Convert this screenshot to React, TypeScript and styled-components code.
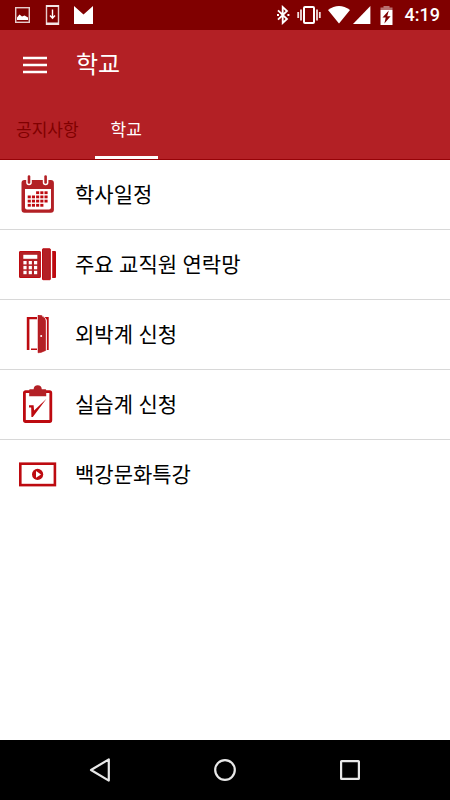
import React from "react";
import styled, { createGlobalStyle } from "styled-components";

const GlobalStyle = createGlobalStyle`
  * { box-sizing: border-box; }
  body {
    margin: 0;
    background: #ffffff;
    font-family: "Noto Sans", "Noto Sans CJK KR", sans-serif;
    color: #000000;
  }
  button { font: inherit; color: inherit; background: none; border: 0; padding: 0; cursor: pointer; }
  svg { display: block; flex: none; }
`;

const Screen = styled.div`
  display: flex;
  flex-direction: column;
  min-height: 100vh;
`;

const StatusBar = styled.div`
  display: flex;
  align-items: center;
  justify-content: space-between;
  height: 30px;
  padding: 0 10px 0 14px;
  background: #800000;
  color: #ffffff;
`;

const StatusGroup = styled.div<{ $gap: number }>`
  display: flex;
  align-items: center;
  gap: ${(p) => p.$gap}px;
`;

const Clock = styled.time`
  margin-left: 2px;
  font: 500 18px/30px Roboto, sans-serif;
`;

const Header = styled.header`
  background: #b32025;
  color: #ffffff;
  border-bottom: 1px solid #960308;
`;

const Toolbar = styled.div`
  display: flex;
  align-items: center;
  gap: 28px;
  height: 69px;
  padding: 0 22px;
`;

const MenuButton = styled.button`
  display: flex;
`;

const Title = styled.h1`
  margin: 0;
  padding-bottom: 2px;
  font-size: 24px;
  line-height: 32px;
  font-weight: 400;
`;

const Tabs = styled.div`
  display: flex;
  height: 60px;
`;

const Tab = styled.button<{ $active?: boolean }>`
  && {
    padding: 5px 16px 0;
    font-size: 17px;
    line-height: 24px;
    color: ${(p) => (p.$active ? "#ffffff" : "#800000")};
    border-bottom: 3px solid ${(p) => (p.$active ? "#ffffff" : "transparent")};
  }
`;

const List = styled.ul`
  flex: 1;
  margin: 0;
  padding: 0;
  list-style: none;
`;

const Item = styled.li`
  border-bottom: 1px solid #d8d8d8;
  &:last-child { border-bottom-color: transparent; }
`;

const RowButton = styled.button`
  && {
    display: flex;
    align-items: center;
    gap: 17px;
    width: 100%;
    height: 69px;
    padding: 0 18px;
    font-size: 21px;
    line-height: 30px;
    text-align: left;
  }
`;

const RowLabel = styled.span`
  padding-bottom: 2px;
`;

const NavBar = styled.nav`
  display: flex;
  justify-content: center;
  gap: 65px;
  height: 60px;
  background: #000000;
`;

const NavButton = styled.button`
  display: flex;
  align-items: center;
  justify-content: center;
  width: 60px;
`;

const RED = "#b32025";
const EDGE = "#bd0a10";

const RowIcon = ({ children }: { children: React.ReactNode }) => (
  <svg width="40" height="39" viewBox="0 0 40 39" aria-hidden="true">
    {children}
  </svg>
);

const calendarCells = [
  [2, 3, 4],
  [0, 1, 2, 3, 4],
  [0, 1, 2, 3, 4],
  [0, 1, 2, 3],
];

const CalendarIcon = () => (
  <RowIcon>
    <rect x="3.5" y="5" width="32.4" height="32.8" rx="3" fill={RED} />
    <path d="M7 14h26v18.5q0 2-2 2H9q-2 0-2-2z" fill="#fff" />
    {[11, 27.6].map((x) => (
      <g key={x}>
        <path d={`M${x - 2.8} 4v3.5a2.8 2.8 0 0 0 5.6 0V4z`} fill="#fff" />
        <path d={`M${x} 1.5v6`} stroke={RED} strokeWidth="2.6" strokeLinecap="round" />
      </g>
    ))}
    {calendarCells.map((cols, r) =>
      cols.map((c) => (
        <rect key={`${r}-${c}`} x={9.7 + c * 4.2} y={16.3 + r * 4.2} width="3.1" height="2.8" fill={EDGE} />
      ))
    )}
  </RowIcon>
);

const PhoneIcon = () => (
  <RowIcon>
    <rect x="1.5" y="6.5" width="20.9" height="26" rx="0.5" fill={RED} stroke={EDGE} />
    <rect x="5.3" y="9.8" width="14" height="4" fill="#fff" />
    {[16, 20.9, 25.8].map((y) =>
      [5.4, 10.7, 16].map((x) => <rect key={`${x}-${y}`} x={x} y={y} width="3.2" height="3.4" fill="#fff" />)
    )}
    <rect x="24.5" y="3.8" width="7.8" height="30.9" rx="0.5" fill={RED} stroke={EDGE} />
    <path d="M34.2 6H37q1 0 1 1v25q0 1-1 1h-2.8z" fill={EDGE} />
  </RowIcon>
);

const DoorIcon = () => (
  <RowIcon>
    <path d="M8.8 2H19v2.2h-7.6V35H8.8zM13 33.6h6V35h-6z" fill={EDGE} />
    <path d="M20 0l3.6.6q4 2 4.1 5v29.9L23 37.4l-3 .4z" fill={RED} stroke={EDGE} strokeWidth="0.5" />
    <path d="M25.5 2h5.2v33h-2V4.8z" fill={EDGE} />
    <path d="M24 .8q4.5 2 4.5 5v29" fill="none" stroke="#fff" strokeWidth="0.7" />
    <circle cx="23.2" cy="21" r="1" fill="#fff" />
  </RowIcon>
);

const ClipboardIcon = () => (
  <RowIcon>
    <rect x="6.4" y="6.7" width="26.4" height="29.8" rx="1.2" fill="#fff" stroke={EDGE} strokeWidth="2.8" />
    <path d="M11.2 11.2V5q0-.8.8-.8h3.6q.3-3.9 4.1-3.9t4.1 3.9h3.6q.8 0 .8.8v6.2z" fill={RED} />
    <path d="M11 20.2h4.6l.5 5.3L28.5 13.8 14.8 32h-1.4l-.2-9.6H11z" fill={EDGE} />
  </RowIcon>
);

const VideoIcon = () => (
  <RowIcon>
    <rect x="2.3" y="8.7" width="34.6" height="21.4" fill="#fff" stroke={EDGE} strokeWidth="2.6" />
    <circle cx="19.6" cy="19.4" r="5.6" fill={EDGE} />
    <path d="M18 16l5 3.4-5 3.4z" fill="#fff" />
  </RowIcon>
);

const items = [
  { label: "학사일정", Icon: CalendarIcon },
  { label: "주요 교직원 연락망", Icon: PhoneIcon },
  { label: "외박계 신청", Icon: DoorIcon },
  { label: "실습계 신청", Icon: ClipboardIcon },
  { label: "백강문화특강", Icon: VideoIcon },
];

export default function App() {
  return (
    <Screen>
      <GlobalStyle />
      <StatusBar>
        <StatusGroup $gap={14}>
          <svg width="17" height="20" viewBox="0 0 17 20">
            <rect x="1.7" y="2.7" width="13.6" height="14.6" fill="none" stroke="#e6cccc" strokeWidth="1.4" />
            <path d="M3 15v-2.5L5.5 9.6 8 11.5l2.5-1 3.5 2V15z" fill="#fff" />
          </svg>
          <svg width="15" height="20" viewBox="0 0 15 20">
            <path d="M1.5.8h12v18.4h-12z" fill="none" stroke="#e6cccc" strokeWidth="1.4" />
            <path d="M1 0h13v2H1zM1 17.5h13V20H1z" fill="#f2e5e5" />
            <path d="M7.5 4.5v8M5 10.5l2.5 2.7 2.5-2.7" fill="none" stroke="#fff" strokeWidth="1.4" />
          </svg>
          <svg width="19" height="18" viewBox="0 0 19 18">
            <path d="M0 0l9.5 8.5L19 0v18H0z" fill="#fff" />
          </svg>
        </StatusGroup>
        <StatusGroup $gap={7}>
          <svg width="14" height="20" viewBox="0 0 14 20">
            <path d="M2 5.3l9 8.7-4.3 4V2L11 6l-9 8.7" fill="none" stroke="#fff" strokeWidth="1.8" />
            <path d="M1 9h2v2H1zM11.4 9h2v2h-2z" fill="#fff" />
          </svg>
          <svg width="24" height="18" viewBox="0 0 24 18">
            <rect x="7" y="1" width="10" height="16" rx="1" fill="none" stroke="#fff" strokeWidth="2" />
            <path d="M4 3.5v11M20 3.5v11M1.2 6v6M22.8 6v6" stroke="#f2dede" strokeWidth="1.8" />
          </svg>
          <StatusGroup $gap={3}>
            <svg width="22" height="18" viewBox="0 0 22 18">
              <path d="M0 4Q11-4 22 4L11 17.6z" fill="#fff" />
            </svg>
            <svg width="18" height="18" viewBox="0 0 18 18">
              <path d="M17.4 0v18H0z" fill="#fff" />
            </svg>
          </StatusGroup>
          <svg width="18" height="19" viewBox="0 0 18 19">
            <path d="M5.5 0h6v1.5h3V4H2.5V1.5h3z" fill="#b87070" />
            <path d="M2.5 4h12v15h-12z" fill="#fff" />
            <path d="M10.8 4.5L4.5 11.5h3.2l-1.3 6 6.2-7.3H9.2z" fill="#800000" />
          </svg>
          <Clock>4:19</Clock>
        </StatusGroup>
      </StatusBar>

      <Header>
        <Toolbar>
          <MenuButton aria-label="메뉴">
            <svg width="26" height="18" viewBox="0 0 26 18">
              <path d="M1 2h24M1 9h24M1 16h24" stroke="#fff" strokeWidth="2.6" />
            </svg>
          </MenuButton>
          <Title>학교</Title>
        </Toolbar>
        <Tabs role="tablist">
          <Tab role="tab" aria-selected={false}>공지사항</Tab>
          <Tab role="tab" aria-selected $active>학교</Tab>
        </Tabs>
      </Header>

      <List>
        {items.map(({ label, Icon }) => (
          <Item key={label}>
            <RowButton>
              <Icon />
              <RowLabel>{label}</RowLabel>
            </RowButton>
          </Item>
        ))}
      </List>

      <NavBar>
        <NavButton aria-label="뒤로">
          <svg width="24" height="26" viewBox="0 0 24 26">
            <path d="M20.8 2.4v21.2L3 13z" fill="none" stroke="#e8e8e8" strokeWidth="2.2" strokeLinejoin="round" />
          </svg>
        </NavButton>
        <NavButton aria-label="홈">
          <svg width="24" height="24" viewBox="0 0 24 24">
            <circle cx="12" cy="12" r="9.8" fill="none" stroke="#e8e8e8" strokeWidth="2.2" />
          </svg>
        </NavButton>
        <NavButton aria-label="최근 앱">
          <svg width="24" height="24" viewBox="0 0 24 24">
            <rect x="3.1" y="3.1" width="17.8" height="17.8" rx="0.5" fill="none" stroke="#e8e8e8" strokeWidth="2.2" />
          </svg>
        </NavButton>
      </NavBar>
    </Screen>
  );
}
